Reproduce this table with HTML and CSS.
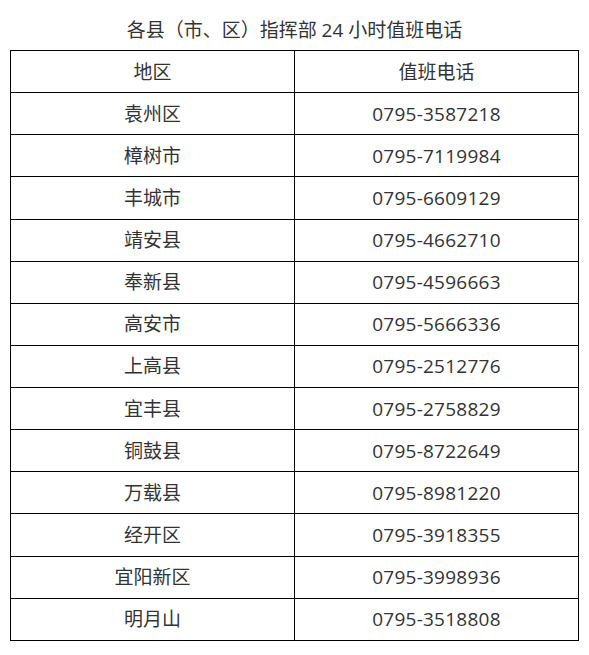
FILE: index.html
```
<!DOCTYPE html>
<html lang="zh-CN">
<head>
<meta charset="utf-8">
<title>各县（市、区）指挥部24小时值班电话</title>
<link rel="stylesheet" href="styles.css">
</head>
<body>
<div class="page">
  <h1 class="title">各县（市、区）指挥部 24 小时值班电话</h1>
  <table class="duty">
    <thead>
      <tr><th>地区</th><th>值班电话</th></tr>
    </thead>
    <tbody>
      <tr><td>袁州区</td><td class="num">0795-3587218</td></tr>
      <tr><td>樟树市</td><td class="num">0795-7119984</td></tr>
      <tr><td>丰城市</td><td class="num">0795-6609129</td></tr>
      <tr><td>靖安县</td><td class="num">0795-4662710</td></tr>
      <tr><td>奉新县</td><td class="num">0795-4596663</td></tr>
      <tr><td>高安市</td><td class="num">0795-5666336</td></tr>
      <tr><td>上高县</td><td class="num">0795-2512776</td></tr>
      <tr><td>宜丰县</td><td class="num">0795-2758829</td></tr>
      <tr><td>铜鼓县</td><td class="num">0795-8722649</td></tr>
      <tr><td>万载县</td><td class="num">0795-8981220</td></tr>
      <tr><td>经开区</td><td class="num">0795-3918355</td></tr>
      <tr><td>宜阳新区</td><td class="num">0795-3998936</td></tr>
      <tr><td>明月山</td><td class="num">0795-3518808</td></tr>
    </tbody>
  </table>
</div>
</body>
</html>
```
FILE: styles.css
```
html, body {
  margin: 0;
  padding: 0;
  background: #ffffff;
}
body {
  font-family: "Open Sans", "Noto Sans CJK SC", sans-serif;
  color: #333333;
  font-size: 19px;
}
.page {
  padding: 0 10px 0 10px;
}
.title {
  margin: 0;
  height: 50px;
  line-height: 60px;
  font-size: 19px;
  font-weight: normal;
  text-align: center;
  color: #333333;
}
.duty {
  width: 569px;
  border-collapse: collapse;
  table-layout: fixed;
}
.duty tr {
  height: 42.14px;
}
.duty th,
.duty td {
  border: 1px solid #000000;
  padding: 0;
  text-align: center;
  vertical-align: middle;
  font-weight: normal;
  font-size: 19px;
  line-height: 24px;
}
.duty .num {
  letter-spacing: 0.25px;
}
```
